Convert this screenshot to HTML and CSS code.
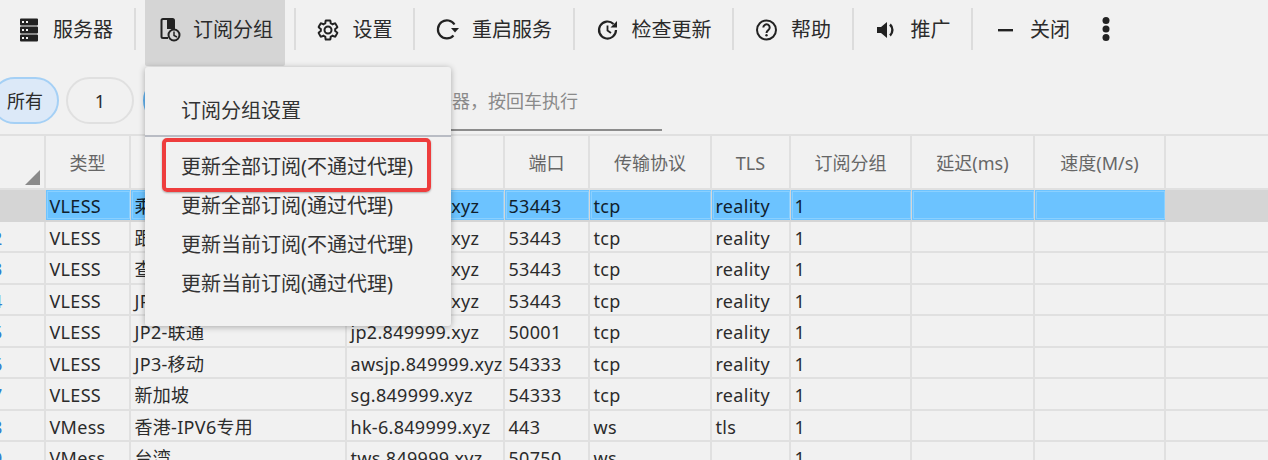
FILE: index.html
```html
<!DOCTYPE html>
<html lang="zh-CN">
<head>
    <meta charset="UTF-8">
    <title>订阅分组</title>
    <link rel="stylesheet" href="styles.css">
</head>
<body>
    <div class="toolbar">
        <div class="tool">
            <svg class="icon" viewBox="0 0 24 24"><path fill="#222" d="M4 .5h16a1 1 0 0 1 1 1v5a1 1 0 0 1-1 1H4a1 1 0 0 1-1-1v-5a1 1 0 0 1 1-1zM4 8.500h16a1 1 0 0 1 1 1v5a1 1 0 0 1-1 1H4a1 1 0 0 1-1-1v-5a1 1 0 0 1 1-1zM4 16.500h16a1 1 0 0 1 1 1v5a1 1 0 0 1-1 1H4a1 1 0 0 1-1-1v-5a1 1 0 0 1 1-1z"/><path fill="#f1f1f1" d="M5 3h2v2H5zM9 3h2v2H9zM5 11h2v2H5zM9 11h2v2H9zM5 19h2v2H5zM9 19h2v2H9z"/></svg>
            <span>服务器</span>
        </div>
        <i class="sep"></i>
        <div class="tool active">
            <svg class="icon" viewBox="0 0 24 24"><path fill="none" stroke="#222" stroke-width="2" d="M11 20H6a1.500 1.500 0 0 1-1.500-1.500v-16A1.500 1.500 0 0 1 6 1h9.500a1.500 1.500 0 0 1 1.500 1.500V12"/><path fill="#222" d="M10 1h6v10h-6z"/><circle cx="17" cy="17" r="5.500" fill="#d5d5d5" stroke="#222" stroke-width="2"/><path fill="none" stroke="#222" stroke-width="1.500" d="M17 13.500V17.500L20 19"/></svg>
            <span>订阅分组</span>
        </div>
        <i class="sep"></i>
        <div class="tool">
            <svg class="icon" viewBox="0 0 24 24"><g transform="translate(-1 0)" fill="none" stroke="#222" stroke-width="2"><path d="M19.140 12.940c.040-.300.060-.610.060-.940 0-.320-.020-.640-.070-.940l2.030-1.580c.180-.140.230-.410.120-.610l-1.920-3.320c-.120-.220-.370-.290-.590-.220l-2.390.960c-.500-.380-1.030-.700-1.620-.940L14.400 2.810c-.040-.240-.240-.410-.480-.410h-3.840c-.240 0-.430.170-.470.410L9.250 5.350c-.590.240-1.130.570-1.620.940L5.240 5.330c-.220-.080-.470 0-.590.220L2.740 8.870c-.120.210-.080.470.120.610l2.030 1.580c-.050.300-.090.630-.090.940s.020.640.070.940l-2.030 1.580c-.180.140-.230.410-.120.610l1.920 3.320c.120.220.370.290.590.220l2.390-.960c.500.380 1.030.700 1.620.940l.360 2.540c.050.240.240.410.480.410h3.840c.240 0 .440-.170.470-.410l.360-2.540c.590-.240 1.130-.560 1.620-.940l2.390.960c.220.080.470 0 .590-.220l1.920-3.320c.120-.220.070-.470-.120-.610z"/><circle cx="12" cy="12" r="3.500"/></g></svg>
            <span>设置</span>
        </div>
        <i class="sep"></i>
        <div class="tool">
            <svg class="icon" viewBox="0 0 24 24"><path fill="none" stroke="#222" stroke-width="2.200" d="M17.500 17.500A9 9 0 1 1 18.500 6.500"/><path fill="#222" d="M15 10h8l-4 4.500z"/></svg>
            <span>重启服务</span>
        </div>
        <i class="sep"></i>
        <div class="tool">
            <svg class="icon" viewBox="0 0 24 24"><path fill="none" stroke="#222" stroke-width="2.200" d="M17.500 6A8.500 8.500 0 1 0 20 12"/><path fill="#222" d="M21 3v6.500h-6.500z"/><path fill="none" stroke="#222" stroke-width="1.800" d="M11.500 7.500V12.500L15 15"/></svg>
            <span>检查更新</span>
        </div>
        <i class="sep"></i>
        <div class="tool">
            <svg class="icon" viewBox="0 0 24 24"><circle cx="11.500" cy="12" r="9.500" fill="none" stroke="#222" stroke-width="2"/><path fill="none" stroke="#222" stroke-width="2" d="M8.300 9.500a3.200 3.200 0 1 1 5 2.700c-1 .7-1.800 1.300-1.800 2.800"/><circle cx="11.500" cy="17.300" r="1.200" fill="#222"/></svg>
            <span>帮助</span>
        </div>
        <i class="sep"></i>
        <div class="tool">
            <svg class="icon" viewBox="0 0 24 24"><path fill="#222" d="M2 9h4l6-5v16l-6-5H2z"/><path fill="none" stroke="#222" stroke-width="2.400" d="M15 6.500a7.500 7.500 0 0 1 0 11"/></svg>
            <span>推广</span>
        </div>
        <i class="sep"></i>
        <div class="tool">
            <svg class="icon" viewBox="0 0 24 24"><path fill="#222" d="M4 11h15v2.400H4z"/></svg>
            <span>关闭</span>
        </div>
        <svg class="more" viewBox="0 0 24 24"><circle cx="12" cy="3.500" r="3.500" fill="#222"/><circle cx="12" cy="12" r="3.500" fill="#222"/><circle cx="12" cy="20.500" r="3.500" fill="#222"/></svg>
    </div>

    <div class="filters">
        <div class="chip on">所有</div>
        <div class="chip">1</div>
        <div class="chip picked">2</div>
        <div class="search">过滤服务器，按回车执行</div>
    </div>

    <div class="grid">
        <div class="row head">
            <div class="cell corner"><i class="sort"></i></div>
            <div class="cell">类型</div>
            <div class="cell">别名</div>
            <div class="cell">地址</div>
            <div class="cell">端口</div>
            <div class="cell">传输协议</div>
            <div class="cell">TLS</div>
            <div class="cell">订阅分组</div>
            <div class="cell">延迟(ms)</div>
            <div class="cell">速度(M/s)</div>
        </div>
        <div class="row selected">
            <div class="cell num">1</div>
            <div class="cell">VLESS</div>
            <div class="cell">乘</div>
            <div class="cell">jp1.849999.xyz</div>
            <div class="cell">53443</div>
            <div class="cell">tcp</div>
            <div class="cell">reality</div>
            <div class="cell">1</div>
            <div class="cell"></div>
            <div class="cell"></div>
        </div>
        <div class="row">
            <div class="cell num">2</div>
            <div class="cell">VLESS</div>
            <div class="cell">跟</div>
            <div class="cell">jp1.849999.xyz</div>
            <div class="cell">53443</div>
            <div class="cell">tcp</div>
            <div class="cell">reality</div>
            <div class="cell">1</div>
            <div class="cell"></div>
            <div class="cell"></div>
        </div>
        <div class="row">
            <div class="cell num">3</div>
            <div class="cell">VLESS</div>
            <div class="cell">查</div>
            <div class="cell">jp1.849999.xyz</div>
            <div class="cell">53443</div>
            <div class="cell">tcp</div>
            <div class="cell">reality</div>
            <div class="cell">1</div>
            <div class="cell"></div>
            <div class="cell"></div>
        </div>
        <div class="row">
            <div class="cell num">4</div>
            <div class="cell">VLESS</div>
            <div class="cell">JP1</div>
            <div class="cell">jp1.849999.xyz</div>
            <div class="cell">53443</div>
            <div class="cell">tcp</div>
            <div class="cell">reality</div>
            <div class="cell">1</div>
            <div class="cell"></div>
            <div class="cell"></div>
        </div>
        <div class="row">
            <div class="cell num">5</div>
            <div class="cell">VLESS</div>
            <div class="cell">JP2-联通</div>
            <div class="cell">jp2.849999.xyz</div>
            <div class="cell">50001</div>
            <div class="cell">tcp</div>
            <div class="cell">reality</div>
            <div class="cell">1</div>
            <div class="cell"></div>
            <div class="cell"></div>
        </div>
        <div class="row">
            <div class="cell num">6</div>
            <div class="cell">VLESS</div>
            <div class="cell">JP3-移动</div>
            <div class="cell">awsjp.849999.xyz</div>
            <div class="cell">54333</div>
            <div class="cell">tcp</div>
            <div class="cell">reality</div>
            <div class="cell">1</div>
            <div class="cell"></div>
            <div class="cell"></div>
        </div>
        <div class="row">
            <div class="cell num">7</div>
            <div class="cell">VLESS</div>
            <div class="cell">新加坡</div>
            <div class="cell">sg.849999.xyz</div>
            <div class="cell">54333</div>
            <div class="cell">tcp</div>
            <div class="cell">reality</div>
            <div class="cell">1</div>
            <div class="cell"></div>
            <div class="cell"></div>
        </div>
        <div class="row">
            <div class="cell num">8</div>
            <div class="cell">VMess</div>
            <div class="cell">香港-IPV6专用</div>
            <div class="cell">hk-6.849999.xyz</div>
            <div class="cell">443</div>
            <div class="cell">ws</div>
            <div class="cell">tls</div>
            <div class="cell">1</div>
            <div class="cell"></div>
            <div class="cell"></div>
        </div>
        <div class="row">
            <div class="cell num">9</div>
            <div class="cell">VMess</div>
            <div class="cell">台湾</div>
            <div class="cell">tws.849999.xyz</div>
            <div class="cell">50750</div>
            <div class="cell">ws</div>
            <div class="cell"></div>
            <div class="cell">1</div>
            <div class="cell"></div>
            <div class="cell"></div>
        </div>
    </div>

    <div class="menu">
        <div class="item">订阅分组设置</div>
        <div class="divider"></div>
        <div class="item">更新全部订阅(不通过代理)</div>
        <div class="item">更新全部订阅(通过代理)</div>
        <div class="item">更新当前订阅(不通过代理)</div>
        <div class="item">更新当前订阅(通过代理)</div>
        <div class="callout"></div>
    </div>
</body>
</html>
```

FILE: styles.css
```css
html, body {
    height: 100%;
}
body {
    margin: 0;
    overflow: hidden;
    background: #f1f1f1;
    color: #2b2b2b;
    font-family: "Noto Sans", "Noto Sans CJK SC", sans-serif;
    font-size: 18px;
}

/* toolbar */
.toolbar {
    display: flex;
    height: 66px;
    padding-left: 5px;
}
.tool {
    display: flex;
    align-items: center;
    gap: 14px;
    margin-right: 9px;
    padding: 0 12px 6px 14px;
    font-size: 20px;
    line-height: 1;
    box-sizing: border-box;
}
.tool + .sep + .tool {
    margin-left: 9px;
    margin-right: 8.5px;
}
.tool.active {
    background: #d5d5d5;
    border-radius: 0 0 2px 2px;
}
.icon {
    width: 24px;
    height: 24px;
    margin: -2px;
    flex: none;
    overflow: visible;
}
.sep {
    flex: none;
    width: 2px;
    height: 42px;
    margin-top: 8px;
    background: #dcdcdc;
}
.more {
    width: 24px;
    height: 24px;
    margin: 17px 0 0 3px;
    flex: none;
}

/* filter chips */
.filters {
    display: flex;
    gap: 7px;
    height: 68px;
    margin-left: -9px;
    padding-top: 11px;
    box-sizing: border-box;
}
.chip {
    width: 68px;
    height: 47px;
    box-sizing: border-box;
    border: 2px solid #e0e0e0;
    border-radius: 24px;
    line-height: 45px;
    text-align: center;
}
.chip.on {
    background: #dce9f8;
    border-color: #a5d0f5;
}
.chip.picked {
    margin-left: 2px;
    background: #cfe6fa;
    border-color: #62b4f2;
}
.search {
    width: 444px;
    height: 54px;
    box-sizing: border-box;
    padding-left: 162px;
    border-bottom: 2px solid #8c8c8c;
    color: #8a8a8a;
    line-height: 49px;
    white-space: nowrap;
}

/* server table */
.grid {
    border-top: 2px solid #e0e0e0;
}
.row {
    display: grid;
    grid-template-columns: 46px 85px 216px 158px 85px 122px 79px 121px 123px 131px;
    height: 31.5px;
    box-sizing: border-box;
    border-bottom: 2px solid #e0e0e0;
    line-height: 32px;
    letter-spacing: 0.3px;
}
.cell {
    box-sizing: border-box;
    padding-left: 3.5px;
    border-right: 2px solid #e0e0e0;
    white-space: nowrap;
    overflow: hidden;
}
.row.head {
    height: 54px;
    color: #666;
    line-height: 54px;
    letter-spacing: 0;
}
.row.head .cell {
    position: relative;
    padding: 0;
    text-align: center;
}
.sort {
    position: absolute;
    right: 4px;
    bottom: 3px;
    width: 0;
    height: 0;
    border-style: solid;
    border-width: 0 0 15px 15px;
    border-color: transparent transparent #8a8a8a transparent;
}
.num {
    padding: 0;
    text-indent: -8px;
    color: #2f7fd0;
}
.row.selected {
    background: #d5d5d5;
    border-bottom-color: #d5d5d5;
}
.row.selected .cell {
    border-right-color: #d5d5d5;
}
.row.selected .cell:not(.num) {
    background: #6cc3ff;
    outline: 1px solid #8ad0ff;
    outline-offset: -2px;
    border-right: 1px solid #d5d5d5;
    color: #10202c;
}

/* dropdown */
.menu {
    position: absolute;
    left: 145px;
    top: 67px;
    width: 306px;
    height: 259px;
    box-sizing: border-box;
    padding-top: 24px;
    background: #f1f1f1;
    border-radius: 3px;
    box-shadow: 0 1px 6px rgba(0, 0, 0, 0.3);
}
.item {
    height: 39px;
    padding-left: 36px;
    font-size: 20px;
    line-height: 39px;
    white-space: nowrap;
    color: #333;
}
.divider {
    height: 2px;
    margin: 5px 0 10px;
    background: #b9bcc4;
}
.callout {
    position: absolute;
    left: 17px;
    top: 71px;
    width: 269px;
    height: 54px;
    box-sizing: border-box;
    border: 4px solid #ee3d3d;
    border-radius: 5px;
    box-shadow: 0 1px 2px rgba(0, 0, 0, 0.3);
}
```
